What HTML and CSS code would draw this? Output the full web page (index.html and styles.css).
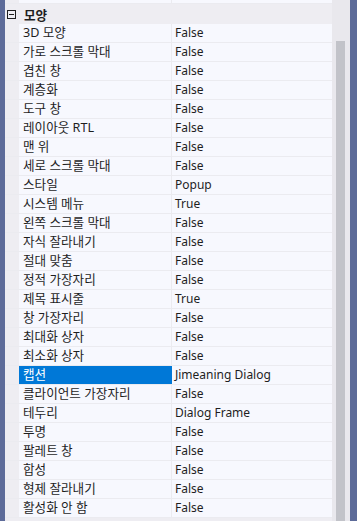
FILE: index.html
```html
<!DOCTYPE html>
<html lang="ko">
<head>
    <meta charset="UTF-8">
    <title>속성</title>
    <link rel="stylesheet" href="styles.css">
</head>
<body>
    <div class="window">
        <div class="edge"></div>

        <div class="grid">
            <div class="row cut"><span class="gut"></span><span class="name"></span><span class="val"></span></div>

            <div class="cat">
                <span class="box"></span>
                <span class="cat-name">모양</span>
            </div>

            <div class="row"><span class="gut"></span><span class="name">3D 모양</span><span class="val">False</span></div>
            <div class="row"><span class="gut"></span><span class="name">가로 스크롤 막대</span><span class="val">False</span></div>
            <div class="row"><span class="gut"></span><span class="name">겹친 창</span><span class="val">False</span></div>
            <div class="row"><span class="gut"></span><span class="name">계층화</span><span class="val">False</span></div>
            <div class="row"><span class="gut"></span><span class="name">도구 창</span><span class="val">False</span></div>
            <div class="row"><span class="gut"></span><span class="name">레이아웃 RTL</span><span class="val">False</span></div>
            <div class="row"><span class="gut"></span><span class="name">맨 위</span><span class="val">False</span></div>
            <div class="row"><span class="gut"></span><span class="name">세로 스크롤 막대</span><span class="val">False</span></div>
            <div class="row"><span class="gut"></span><span class="name">스타일</span><span class="val">Popup</span></div>
            <div class="row"><span class="gut"></span><span class="name">시스템 메뉴</span><span class="val">True</span></div>
            <div class="row"><span class="gut"></span><span class="name">왼쪽 스크롤 막대</span><span class="val">False</span></div>
            <div class="row"><span class="gut"></span><span class="name">자식 잘라내기</span><span class="val">False</span></div>
            <div class="row"><span class="gut"></span><span class="name">절대 맞춤</span><span class="val">False</span></div>
            <div class="row"><span class="gut"></span><span class="name">정적 가장자리</span><span class="val">False</span></div>
            <div class="row"><span class="gut"></span><span class="name">제목 표시줄</span><span class="val">True</span></div>
            <div class="row"><span class="gut"></span><span class="name">창 가장자리</span><span class="val">False</span></div>
            <div class="row"><span class="gut"></span><span class="name">최대화 상자</span><span class="val">False</span></div>
            <div class="row"><span class="gut"></span><span class="name">최소화 상자</span><span class="val">False</span></div>
            <div class="row selected"><span class="gut"></span><span class="name">캡션</span><span class="val">Jimeaning Dialog</span></div>
            <div class="row"><span class="gut"></span><span class="name">클라이언트 가장자리</span><span class="val">False</span></div>
            <div class="row"><span class="gut"></span><span class="name">테두리</span><span class="val">Dialog Frame</span></div>
            <div class="row"><span class="gut"></span><span class="name">투명</span><span class="val">False</span></div>
            <div class="row"><span class="gut"></span><span class="name">팔레트 창</span><span class="val">False</span></div>
            <div class="row"><span class="gut"></span><span class="name">합성</span><span class="val">False</span></div>
            <div class="row"><span class="gut"></span><span class="name">형제 잘라내기</span><span class="val">False</span></div>
            <div class="row"><span class="gut"></span><span class="name">활성화 안 함</span><span class="val">False</span></div>
        </div>

        <div class="scroll">
            <div class="thumb"></div>
        </div>

        <div class="edge right"></div>
    </div>
</body>
</html>
```

FILE: styles.css
```css
body
{
    margin: 0;
    font-family: "Noto Sans", "Noto Sans CJK KR", sans-serif;
    font-size: 12px;
    color: #1e1e1e;
}

.window
{
    display: flex;
    height: 521px;
    width: 357px;
    overflow: hidden;
    background: #eeedf2;
}

.edge
{
    width: 5px;
    background: #5d6b99;
}

.edge.right
{
    width: 7px;
}

.grid
{
    width: 327px;
}

.row
{
    display: flex;
    height: 18px;
    border-bottom: 1px solid #ebebf0;
    line-height: 18px;
    white-space: nowrap;
}

.row.cut
{
    height: 3px;
}

.gut
{
    width: 14px;
    background: #eeedf2;
}

.name
{
    width: 148px;
    padding-left: 4px;
    font-size: 12.6px;
    background: #f7f8fe;
    border-right: 1px solid #ebebf0;
    overflow: hidden;
}

.val
{
    flex: 1;
    padding-left: 3px;
    background: #f7f8fe;
}

.selected .name
{
    background: #0078d7;
    color: #ffffff;
    border-right-color: #0078d7;
}

.cat
{
    display: flex;
    align-items: center;
    height: 20px;
    background: #eeedf2;
}

.box
{
    position: relative;
    width: 7px;
    height: 7px;
    margin-left: 2px;
    border: 1px solid #1e1e1e;
}

.box::after
{
    content: "";
    position: absolute;
    left: 1px;
    top: 3px;
    width: 5px;
    height: 1px;
    background: #1e1e1e;
}

.cat-name
{
    margin-left: 8px;
    font-size: 12.6px;
    font-weight: bold;
}

.scroll
{
    width: 18px;
    background: #e9e8ed;
}

.thumb
{
    width: 9px;
    height: 480px;
    margin-top: 41px;
    margin-left: 4px;
    background: #c2c3c9;
}
```
